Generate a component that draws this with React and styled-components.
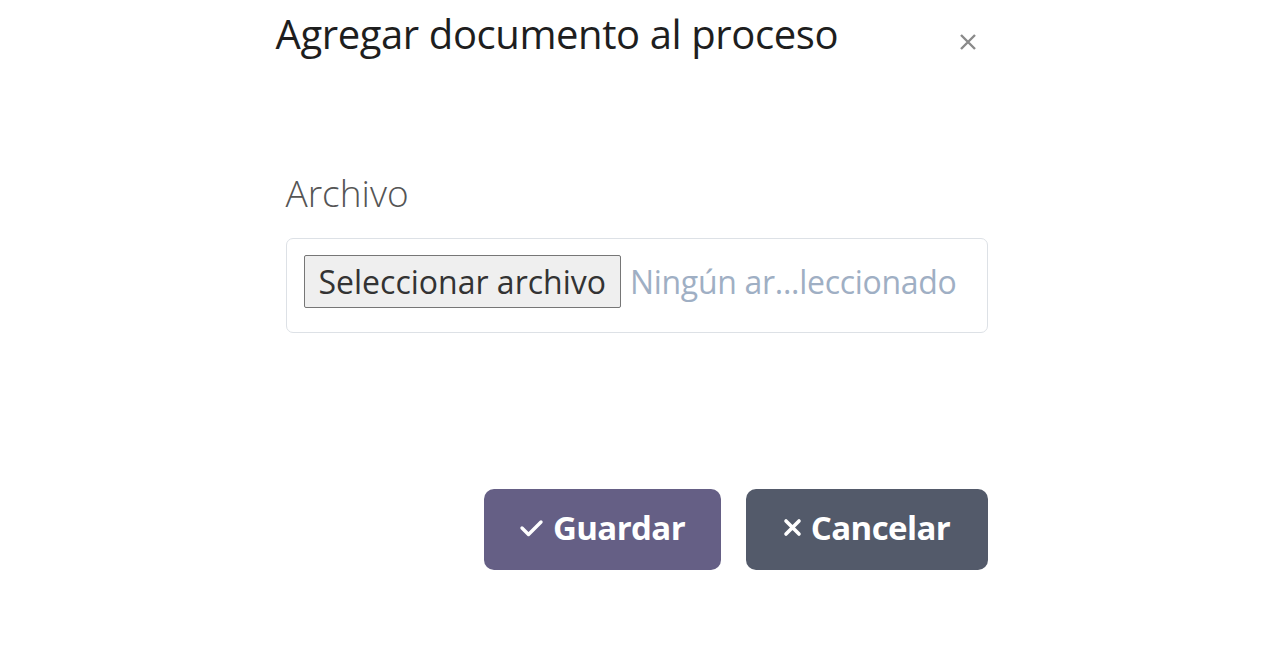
import React from 'react';
import styled, { createGlobalStyle } from 'styled-components';

const GlobalStyle = createGlobalStyle`
  html, body {
    margin: 0;
    padding: 0;
    background: #ffffff;
    font-family: "Open Sans", "Liberation Sans", sans-serif;
  }
`;

const Page = styled.div`
  width: 1263px;
  height: 646px;
  display: flex;
  justify-content: center;
  background: #fff;
`;

const Modal = styled.div`
  width: 712px;
  display: flex;
  flex-direction: column;
`;

const Header = styled.div`
  display: flex;
  justify-content: space-between;
  align-items: flex-start;
  height: 96px;
`;

const Title = styled.h2`
  margin: 10px 0 0 0;
  font-size: 40px;
  line-height: 48px;
  font-weight: 500;
  color: #1e1e1e;
  letter-spacing: -0.4px;
`;

const CloseBtn = styled.button`
  border: none;
  background: none;
  padding: 0;
  margin: 32px 10px 0 0;
  width: 20px;
  height: 20px;
  display: flex;
  align-items: center;
  justify-content: center;
  color: #8a8a8a;
  cursor: pointer;
`;

const Body = styled.div`
  padding: 75px 0 0 10px;
`;

const Label = styled.label`
  display: block;
  font-size: 37px;
  font-weight: 300;
  color: #555;
  margin-bottom: 23px;
  line-height: 44px;
`;

const FileBox = styled.div`
  height: 95px;
  border: 1px solid #dde1e6;
  border-radius: 7px;
  display: flex;
  align-items: flex-start;
  padding: 16px 17px;
  box-sizing: border-box;
  gap: 9px;
`;

const FileButton = styled.div`
  height: 53px;
  box-sizing: border-box;
  padding: 0 14px;
  background: #efefef;
  border: 1px solid #767676;
  border-radius: 2px;
  display: flex;
  align-items: center;
  font-size: 32px;
  color: #333;
  white-space: nowrap;
`;

const FileName = styled.span`
  line-height: 53px;
  font-size: 32px;
  color: #9fafc4;
  white-space: nowrap;
  letter-spacing: -0.3px;
`;

const Footer = styled.div`
  display: flex;
  justify-content: flex-end;
  gap: 25px;
  margin-top: 156px;
`;

const ActionButton = styled.button`
  width: ${({ w }) => w}px;
  height: 81px;
  border: none;
  border-radius: 10px;
  background: ${({ bg }) => bg};
  color: #fff;
  font-family: "Open Sans", sans-serif;
  font-size: 33px;
  font-weight: 700;
  display: flex;
  align-items: center;
  justify-content: center;
  gap: 9px;
  letter-spacing: -0.6px;
  padding: 0 0 4px 0;
`;

export default function App() {
  return (
    <Page>
      <GlobalStyle />
      <Modal>
        <Header>
          <Title>Agregar documento al proceso</Title>
          <CloseBtn aria-label="Cerrar">
            <svg width="20" height="20" viewBox="0 0 20 20" fill="none" stroke="currentColor" strokeWidth="2.4">
              <path d="M3 3l14 14M17 3L3 17" />
            </svg>
          </CloseBtn>
        </Header>
        <Body>
          <Label>Archivo</Label>
          <FileBox>
            <FileButton>Seleccionar archivo</FileButton>
            <FileName>Ningún ar...leccionado</FileName>
          </FileBox>
        </Body>
        <Footer>
          <ActionButton w={237} bg="#655f85">
            <svg width="25" height="20" viewBox="0 0 25 20" fill="none" stroke="currentColor" strokeWidth="3.4" strokeLinecap="round" strokeLinejoin="round">
              <path d="M3 10l6.5 6.5L22 4" />
            </svg>
            Guardar
          </ActionButton>
          <ActionButton w={242} bg="#535a6a">
            <svg width="19" height="19" viewBox="0 0 19 19" fill="none" stroke="currentColor" strokeWidth="3.6" strokeLinecap="round">
              <path d="M3 3l13 13M16 3L3 16" />
            </svg>
            Cancelar
          </ActionButton>
        </Footer>
      </Modal>
    </Page>
  );
}
